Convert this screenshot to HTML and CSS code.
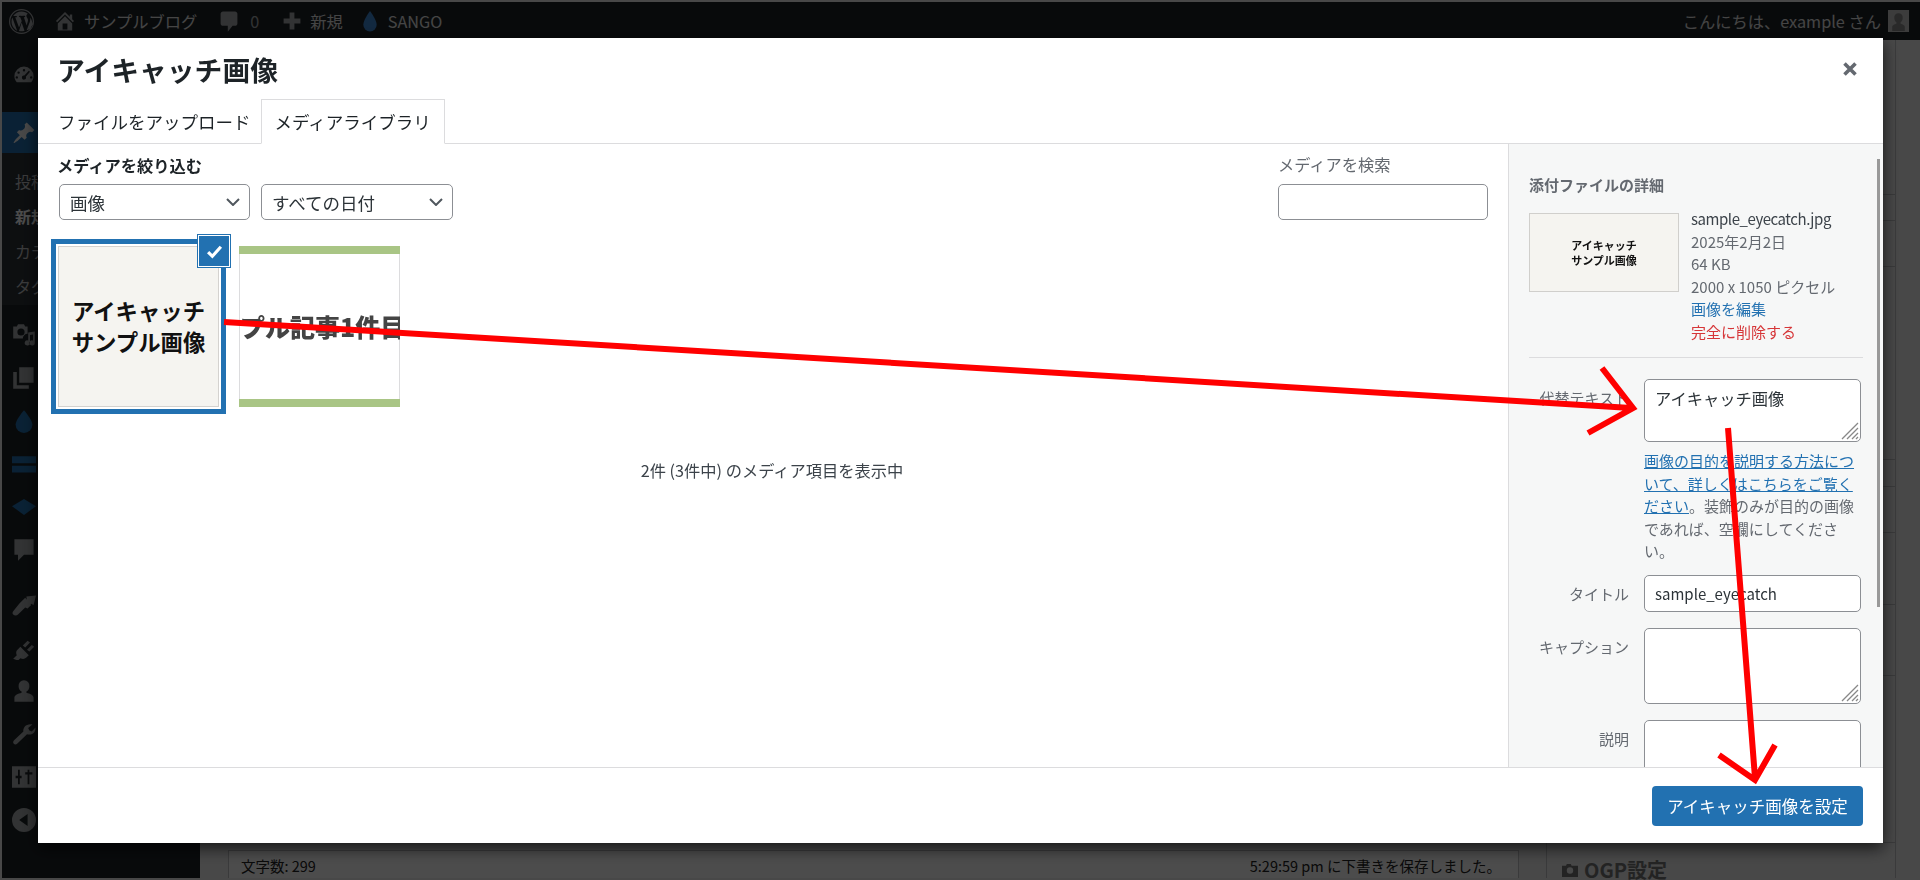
FILE: index.html
```html
<!DOCTYPE html>
<html lang="ja">
  <head>
    <meta charset="UTF-8" />
    <title>アイキャッチ画像</title>
    <link rel="stylesheet" href="styles.css">
  </head>
  <body>
    <!-- admin page behind the modal -->
    <header class="adminbar">
      <svg class="bar-logo" viewBox="0 0 20 20"><path fill-rule="evenodd" d="M10 0a10 10 0 1 0 0 20a10 10 0 0 0 0-20zM10 1a9 9 0 1 1 0 18a9 9 0 0 1 0-18zM8 14.8L5 6.6l1.050-.1c.4-.1.4-1-.1-1 0 0-1.300.1-2.100.1h-.5C4.700 3.400 7.200 2 10 2c2.100 0 4 .8 5.400 2.100-.6-.1-1.500.3-1.500 1.400 0 .5.400 1 .7 1.600.3.500.6 1.100.6 1.900 0 .6-.3 1.300-.5 2.100l-.6 2.100-2.200-6.600c.5 0 .8-.2.8-.2.4 0 .4-1-.1-1 0 0-1.300.1-2.200.1-.8 0-2.100-.1-2.100-.1-.5 0-.5 1-.1 1l.8.1 1.200 3.100zM14.100 17l2.200-5.800c.2-.4.5-1.200.6-2 .3-1.400 0-2.100 0-2.400 1.200 1.600 1.900 3.600 1.900 5.700 0 2.300-2.200 3.800-4.700 4.500zM2.700 6.800l3.800 10.500C3.800 16 2 13.200 2 10c0-1.200.2-2.300.7-3.200zM10.100 10.700l2.300 6.700c-.7.300-1.500.4-2.400.4-.7 0-1.400-.1-2-.3z"/></svg>
      <svg class="bar-icon home-icon" viewBox="0 0 20 20"><path d="M16 8.500l1.530 1.530-1.060 1.060L10 4.620l-6.470 6.470-1.060-1.060L10 2.500l4 4v-2h2v4zm-6-2.460l6 5.990V18H4v-5.970zM12 17v-5H8v5h4z"/></svg>
      <span class="bar-text site-name">サンプルブログ</span>
      <svg class="bar-icon comment-icon" viewBox="0 0 20 20"><path d="M5 2h10c1.100 0 2 .9 2 2v8c0 1.100-.9 2-2 2h-2l-4 5v-5H5c-1.100 0-2-.9-2-2V4c0-1.100.9-2 2-2z"/></svg>
      <span class="bar-text zero">0</span>
      <svg class="bar-icon plus-icon" viewBox="0 0 20 20"><path d="M17 8v4h-5v5H8v-5H3V8h5V3h4v5h5z"/></svg>
      <span class="bar-text new-text">新規</span>
      <svg class="drop-icon" viewBox="0 0 16 22"><path d="M8 0C8 0 1 9 1 14.500a7 7 0 0 0 14 0C15 9 8 0 8 0z"/></svg>
      <span class="bar-text sango-text">SANGO</span>
      <span class="bar-text greeting">こんにちは、example さん</span>
      <span class="avatar"><svg viewBox="0 0 20 20"><path d="M10 3a4 4 0 0 1 4 4.500c0 2-1.200 3.500-2 4.200v1.300c2 .8 4 1.500 4 3v4H4v-4c0-1.500 2-2.200 4-3v-1.300c-.8-.7-2-2.200-2-4.200A4 4 0 0 1 10 3z"/></svg></span>
    </header>

    <div class="page">
      <nav class="sidemenu">
        <div class="menu-item first"><svg viewBox="0 0 20 20"><path fill-rule="evenodd" d="M10 3a8 8 0 0 0-8 8c0 2 .8 3.800 2 5h12c1.200-1.200 2-3 2-5a8 8 0 0 0-8-8zM10 5a1 1 0 1 1 0 2a1 1 0 0 1 0-2zM5.500 7a1 1 0 1 1 0 2a1 1 0 0 1 0-2zM14 6.500l1 .8-3.500 4.200a1.700 1.700 0 1 1-1.200-1zM4 11a1 1 0 1 1 0 2a1 1 0 0 1 0-2zM16 11a1 1 0 1 1 0 2a1 1 0 0 1 0-2z"/></svg></div>
        <div class="menu-item active"><svg viewBox="0 0 20 20"><path d="M10.440 3.020l1.820-1.820 6.360 6.350-1.830 1.820c-1.050-.68-2.480-.57-3.410.36l-.75.75c-.92.93-1.040 2.350-.35 3.410l-1.830 1.820-2.410-2.410-2.800 2.790c-.42.42-3.380 2.710-3.800 2.290s1.860-3.390 2.280-3.810l2.790-2.790L4.100 9.360l1.830-1.820c1.050.69 2.480.57 3.400-.36l.75-.75c.93-.92 1.050-2.350.36-3.410z"/></svg></div>
        <ul class="submenu">
          <li>投稿一覧</li>
          <li class="current">新規追加</li>
          <li>カテゴリー</li>
          <li>タグ</li>
        </ul>
        <div class="menu-item"><svg viewBox="0 0 20 20"><path fill-rule="evenodd" d="M1 3h3l1-2h5l1 2h2v6a4 4 0 0 0-4 4H1zM7.500 4.500a3 3 0 1 0 0 6a3 3 0 0 0 0-6zM19 7v9.500a2.200 2.200 0 1 1-1.500-2V9.500L15 10v6.500a2.200 2.200 0 1 1-1.500-2V8z"/></svg></div>
        <div class="menu-item"><svg viewBox="0 0 20 20"><path d="M6 14V1h12v13zM4 16h10v3H1V5h3z"/></svg></div>
        <div class="menu-item"><svg class="tinted" viewBox="0 0 20 20"><path d="M10 1C10 1 3 9 3 13a7 7 0 0 0 14 0C17 9 10 1 10 1z"/></svg></div>
        <div class="menu-item"><svg class="tinted wide" viewBox="0 0 28 20"><path d="M0 1h28v8H0zM0 12h28v8H0z"/></svg></div>
        <div class="menu-item"><svg class="tinted wide" viewBox="0 0 30 20"><path d="M15 0l15 9-15 11L0 9z"/></svg></div>
        <div class="menu-item"><svg viewBox="0 0 20 20"><path d="M2 1h16v13H10l-5 5v-5H2z"/></svg></div>
        <div class="menu-item gap"><svg viewBox="0 0 20 20"><path d="M12 3l8-1-2 8-2-1-3 3zM11 4l5 6-3 3-2-1-6 6c-1 1-3 1-4 0s-.5-2.500.5-3.500L6 9l1-1z"/></svg></div>
        <div class="menu-item"><svg viewBox="0 0 20 20"><path d="M1 19l3-3c-1-2-.5-4 1-5l2-2 7 7-2 2c-1.500 1.200-3 1.500-5 .5l-2 2zM9 8l4-4 2 1.500-4 4zM12.500 11.500l4-4 2 1.500-4 4z"/></svg></div>
        <div class="menu-item"><svg viewBox="0 0 20 20"><path d="M10 1a4.500 4.500 0 0 1 4.500 5c0 2-1 3.500-2.500 4.500v1c3 .8 6 2 6 4V19H2v-3.500c0-2 3-3.200 6-4v-1C6.500 9.500 5.500 8 5.500 6A4.500 4.500 0 0 1 10 1z"/></svg></div>
        <div class="menu-item"><svg viewBox="0 0 20 20"><path d="M17 2l-3.500 3 1 2 2 1 3-3.500c.5 3-1.500 6-5 6-.8 0-1.300 0-2-.3L4.500 18c-1 1-2.300 1-3 .2s-.8-2 .2-3l7.800-7.200C9 4.500 12 1 17 2z"/></svg></div>
        <div class="menu-item"><svg viewBox="0 0 20 20"><path fill-rule="evenodd" d="M0 1h20v18H0zM5 4v5H3v2h2v5h1.500v-5H8V9H6.500V4zM13 4v2h-2v2h2v8h1.500V8H17V6h-2.500V4z"/></svg></div>
        <div class="menu-item"><svg viewBox="0 0 20 20"><path fill-rule="evenodd" d="M10 0a10 10 0 1 0 0 20a10 10 0 0 0 0-20zM13 5v10L6 10z"/></svg></div>
      </nav>

      <div class="content">
        <div class="editor-col">
          <div class="statusbar">
            <span>文字数: 299</span>
            <span>5:29:59 pm に下書きを保存しました。</span>
          </div>
        </div>
        <aside class="meta-col">
          <div class="metabox" style="height: 155px"></div>
          <div class="metabox" style="height: 26px"></div>
          <div class="metabox" style="height: 46px"></div>
          <div class="metabox" style="height: 193px"></div>
          <div class="metabox" style="height: 27px"></div>
          <div class="metabox" style="height: 46px"></div>
          <div class="metabox" style="height: 72px"></div>
          <div class="metabox" style="height: 71px"></div>
          <div class="metabox" style="height: 167px"></div>
          <div class="ogp">
            <svg viewBox="0 0 20 16"><path fill-rule="evenodd" d="M0 2h5l1-2h5l1 2h8v14H0zM10 4a4 4 0 1 0 0 8a4 4 0 0 0 0-8z"/></svg>
            <span>OGP設定</span>
          </div>
        </aside>
      </div>
    </div>

    <div class="overlay"></div>

    <!-- modal -->
    <div class="modal">
      <div class="modal-head">
        <h1>アイキャッチ画像</h1>
        <svg class="close-icon" viewBox="0 0 14 14"><path d="M1.500 1.500l11 11M12.500 1.500l-11 11"/></svg>
      </div>
      <div class="tabs">
        <a class="tab">ファイルをアップロード</a>
        <a class="tab active">メディアライブラリ</a>
      </div>

      <div class="modal-body">
        <section class="browser">
          <div class="toolbar">
            <div>
              <h2 class="filter-title">メディアを絞り込む</h2>
              <div class="filters">
                <select class="filter type-filter"><option>画像</option></select>
                <select class="filter date-filter"><option>すべての日付</option></select>
              </div>
            </div>
            <div class="search">
              <label>メディアを検索</label>
              <input type="search" />
            </div>
          </div>

          <div class="attachments">
            <div class="attachment selected">
              <div class="thumb-big">アイキャッチ<br />サンプル画像</div>
              <span class="check"><svg viewBox="0 0 16 16"><path d="M2 8.500l4 4 8-9"/></svg></span>
            </div>
            <div class="attachment">
              <div class="thumb-green"><span>プル記事1件目</span></div>
            </div>
          </div>
          <p class="count">2件 (3件中) のメディア項目を表示中</p>
        </section>

        <aside class="details">
          <h2>添付ファイルの詳細</h2>
          <div class="file-info">
            <div class="thumb-small">アイキャッチ<br />サンプル画像</div>
            <div class="file-meta">
              <div class="file-name">sample_eyecatch.jpg</div>
              <div>2025年2月2日</div>
              <div>64 KB</div>
              <div>2000 x 1050 ピクセル</div>
              <div><a class="link">画像を編集</a></div>
              <div><a class="del">完全に削除する</a></div>
            </div>
          </div>
          <div class="fields">
            <label>代替テキスト</label>
            <div>
              <textarea class="alt-box" readonly>アイキャッチ画像</textarea>
              <p class="hint"><a class="link under">画像の目的を説明する方法について、詳しくはこちらをご覧ください</a>。装飾のみが目的の画像であれば、空欄にしてください。</p>
            </div>
            <label>タイトル</label>
            <input type="text" value="sample_eyecatch" readonly />
            <label>キャプション</label>
            <textarea class="caption-box" readonly></textarea>
            <label>説明</label>
            <textarea class="caption-box" readonly></textarea>
          </div>
          <span class="scroll-thumb"></span>
        </aside>
      </div>

      <div class="modal-foot">
        <button>アイキャッチ画像を設定</button>
      </div>
    </div>

    <!-- red arrows drawn on top of the screenshot -->
    <svg class="arrows" viewBox="0 0 1920 880">
      <path d="M224 322L1631 408M1602 368L1633 408L1588 433"/>
      <path d="M1728 428L1755 778M1719 755L1755 780L1775 745"/>
    </svg>
  </body>
</html>
```

FILE: styles.css
```css
* {
  margin: 0;
  padding: 0;
  box-sizing: border-box;
}
html,
body {
  height: 880px;
  overflow: hidden;
}
body {
  display: flex;
  flex-direction: column;
  padding: 2px 0 2px 2px;
  background: #f0f0f1;
  font-family: "Noto Sans CJK JP", "Noto Sans", sans-serif;
  font-size: 15px;
  line-height: 22.5px;
  color: #3c434a;
}

/* admin bar */
.adminbar {
  display: flex;
  align-items: center;
  flex: none;
  height: 38px;
  background: #1d2327;
}
.adminbar svg {
  fill: #a7aaad;
}
.bar-logo {
  width: 25px;
  height: 25px;
  margin-left: 7px;
}
.bar-icon {
  width: 24px;
  height: 24px;
}
.home-icon {
  margin-left: 19px;
}
.bar-text {
  font-size: 16.25px;
  color: #e6e6e6;
}
.site-name {
  margin-left: 7px;
}
.comment-icon {
  margin-left: 20px;
}
.zero {
  margin-left: 9px;
  color: #a7aaad;
}
.plus-icon {
  margin-left: 21px;
}
.new-text {
  margin-left: 6px;
}
.adminbar .drop-icon {
  width: 16px;
  height: 21px;
  margin-left: 19px;
  fill: #3f8ad6;
}
.sango-text {
  margin-left: 10px;
}
.greeting {
  margin-left: auto;
}
.avatar {
  display: block;
  width: 21px;
  height: 22px;
  margin: 0 11px 0 7px;
  background: #c8c8c8;
  overflow: hidden;
}
.adminbar .avatar svg {
  display: block;
  fill: #8a8a8a;
}

/* page behind */
.page {
  display: flex;
  flex: 1;
  min-height: 0;
}
.sidemenu {
  flex: none;
  width: 198px;
  background: #1d2327;
  color: #f0f0f1;
}
.menu-item {
  display: flex;
  align-items: center;
  height: 43px;
  padding-left: 10px;
}
.menu-item svg {
  width: 24px;
  height: 24px;
  fill: #a7aaad;
}
.menu-item svg.tinted {
  fill: #2271b1;
}
.menu-item.first {
  margin-top: 13px;
}
.menu-item.active {
  margin-top: 16px;
  height: 41px;
  background: #2271b1;
}
.menu-item.active svg {
  fill: #f0f0f1;
}
.menu-item.gap {
  margin-top: 12px;
}
.submenu {
  height: 152px;
  margin-bottom: 8px;
  padding-top: 11px;
  list-style: none;
  background: #2c3338;
  color: #c3c4c7;
  font-size: 16px;
}
.submenu li {
  height: 35px;
  padding-left: 13px;
  line-height: 35px;
}
.submenu li.current {
  color: #fff;
  font-weight: 700;
}
.content {
  display: flex;
  flex: 1;
  min-width: 0;
}
.editor-col {
  display: flex;
  flex: none;
  align-items: flex-end;
  width: 1319px;
  padding-left: 28px;
}
.statusbar {
  display: flex;
  justify-content: space-between;
  width: 100%;
  height: 28px;
  padding: 4px 17px 0 12px;
  border: 1px solid #c3c4c7;
  border-bottom: 0;
  background: #fff;
  font-size: 14.5px;
  color: #222;
}
.meta-col {
  flex: none;
  width: 350px;
  margin-left: 27px;
  border-left: 1px solid #c3c4c7;
  border-right: 1px solid #c3c4c7;
}
.metabox {
  border-bottom: 1px solid #c3c4c7;
}
.ogp {
  display: flex;
  align-items: center;
  gap: 6px;
  margin: 19px 0 0 15px;
  font-size: 20px;
  font-weight: 700;
  line-height: 16px;
  color: #777;
}
.ogp svg {
  width: 16px;
  height: 13px;
  fill: #777;
}
.overlay {
  position: fixed;
  inset: 0;
  background: rgba(0, 0, 0, 0.7);
}

/* modal */
.modal {
  position: fixed;
  top: 38px;
  left: 38px;
  display: flex;
  flex-direction: column;
  width: 1845px;
  height: 805px;
  background: #fff;
  box-shadow: 0 5px 15px rgba(0, 0, 0, 0.7);
}
.modal-head {
  display: flex;
  align-items: center;
  justify-content: space-between;
  flex: none;
  height: 61px;
  padding: 0 26px 0 19px;
}
.modal-head h1 {
  font-size: 27.8px;
  line-height: 50px;
  color: #1d2327;
}
.close-icon {
  width: 14px;
  height: 14px;
  fill: none;
  stroke: #646970;
  stroke-width: 3.6;
}
.tabs {
  display: flex;
  flex: none;
  height: 45px;
  padding-left: 8px;
  border-bottom: 1px solid #dcdcde;
}
.tab {
  height: 45px;
  padding: 0 9px 0 11px;
  font-size: 17.5px;
  line-height: 43px;
  color: #1d2327;
  border: 1px solid transparent;
}
.tab.active {
  padding: 0 13px;
  border-color: #dcdcde #dcdcde #fff;
  background: #fff;
}
.modal-body {
  display: flex;
  flex: 1;
  min-height: 0;
}
.modal-foot {
  flex: none;
  display: flex;
  justify-content: flex-end;
  height: 76px;
  padding: 18px 20px 0 0;
  border-top: 1px solid #dcdcde;
}
.modal-foot button {
  width: 211px;
  height: 40px;
  border: none;
  border-radius: 4px;
  background: #2271b1;
  color: #fff;
  font-family: inherit;
  font-size: 16.5px;
}

/* media browser */
.browser {
  flex: none;
  width: 1470px;
}
.toolbar {
  display: flex;
  justify-content: space-between;
  padding: 10px 20px 0 21px;
}
.filter-title {
  margin-left: -2px;
  font-size: 16.25px;
  line-height: 22px;
  color: #1d2327;
}
.filters {
  display: flex;
  gap: 11px;
  margin-top: 8px;
}
.filter {
  height: 36px;
  padding-left: 10px;
  border: 1px solid #8c8f94;
  border-radius: 5px;
  appearance: none;
  background: #fff url("data:image/svg+xml,%3Csvg xmlns='http://www.w3.org/2000/svg' viewBox='0 0 14 8'%3E%3Cpath d='M1 1l6 6 6-6' fill='none' stroke='%2350575e' stroke-width='2'/%3E%3C/svg%3E") no-repeat right 9px center / 14px 8px;
  font-family: inherit;
  font-size: 17.5px;
  color: #2c3338;
}
.type-filter {
  width: 191px;
}
.date-filter {
  width: 192px;
}
.search label {
  display: block;
  font-size: 16.25px;
  line-height: 22px;
  margin-top: -1px;
  color: #646970;
}
.search input {
  display: block;
  width: 210px;
  height: 36px;
  margin-top: 9px;
  border: 1px solid #8c8f94;
  border-radius: 5px;
  background: #fff;
}
.attachments {
  display: flex;
  gap: 20px;
  margin: 26px 0 0 20px;
}
.attachment {
  position: relative;
  width: 161px;
  height: 161px;
}
.attachment.selected {
  box-shadow: 0 0 0 2px #fff, 0 0 0 7px #2271b1;
}
.thumb-big {
  display: flex;
  align-items: center;
  justify-content: center;
  height: 100%;
  padding-bottom: 2px;
  border: 1px solid #d4d2cf;
  background: #f5f4f0;
  font-size: 22.4px;
  font-weight: 700;
  line-height: 31px;
  text-align: center;
  color: #111;
}
.check {
  position: absolute;
  top: -11px;
  right: -11px;
  display: flex;
  align-items: center;
  justify-content: center;
  width: 32px;
  height: 32px;
  border: 1px solid #fff;
  background: #2271b1;
  box-shadow: 0 0 0 1px #2271b1;
}
.check svg {
  width: 17px;
  height: 17px;
  fill: none;
  stroke: #fff;
  stroke-width: 3;
}
.thumb-green {
  display: flex;
  align-items: center;
  height: 100%;
  padding-left: 1px;
  overflow: hidden;
  white-space: nowrap;
  border-top: 8px solid #a9c585;
  border-bottom: 8px solid #a9c585;
  box-shadow: inset 1px 0 #dcdcde, inset -1px 0 #dcdcde;
  font-size: 25px;
  font-weight: 900;
  color: #444;
}
.thumb-green span {
  filter: blur(0.7px);
}
.count {
  width: 100%;
  margin-top: 52px;
  padding-right: 2px;
  font-size: 16.25px;
  text-align: center;
  color: #3c434a;
}

/* attachment details */
.details {
  position: relative;
  flex: 1;
  min-width: 0;
  overflow: hidden;
  padding: 30px 0 0 20px;
  border-left: 1px solid #dcdcde;
  background: #f6f7f7;
  color: #646970;
}
.details h2 {
  font-size: 15px;
  line-height: 22px;
}
.file-info {
  display: flex;
  gap: 12px;
  width: 334px;
  height: 150px;
  margin-top: 12px;
  border-bottom: 1px solid #dcdcde;
}
.thumb-small {
  flex: none;
  width: 150px;
  height: 79px;
  margin-top: 5px;
  padding-top: 24px;
  border: 1px solid #d0cfcc;
  background: #f5f4f0;
  font-size: 11px;
  font-weight: 700;
  line-height: 15px;
  text-align: center;
  color: #111;
}
.file-name {
  letter-spacing: -0.45px;
  color: #3c434a;
}
.link {
  color: #2271b1;
}
.link.under {
  text-decoration: underline;
}
.del {
  color: #d63638;
}
.fields {
  display: grid;
  grid-template-columns: 100px 217px;
  column-gap: 15px;
  row-gap: 16px;
  margin-top: 21px;
}
.fields label {
  padding-top: 8px;
  text-align: right;
}
.fields textarea,
.fields input {
  display: block;
  width: 217px;
  padding: 6px 10px;
  border: 1px solid #8c8f94;
  border-radius: 5px;
  background-color: #fff;
  font-family: inherit;
  font-size: 16.25px;
  color: #2c3338;
}
.fields textarea {
  resize: none;
  background-image: url("data:image/svg+xml,%3Csvg xmlns='http://www.w3.org/2000/svg' viewBox='0 0 18 18'%3E%3Cpath d='M1 17L17 1M6 17L17 6M11 17l6-6M15 17l2-2' fill='none' stroke='%23888' stroke-width='1.300'/%3E%3C/svg%3E");
  background-repeat: no-repeat;
  background-position: right 1px bottom 1px;
  background-size: 18px 18px;
}
.fields input {
  height: 37px;
  font-size: 15px;
}
.alt-box {
  height: 63px;
}
.caption-box {
  height: 76px;
}
.hint {
  margin-top: 8px;
  margin-bottom: -4px;
}
.scroll-thumb {
  position: absolute;
  top: 15px;
  right: 3px;
  width: 3px;
  height: 448px;
  background: #999;
}

/* annotation */
.arrows {
  position: fixed;
  inset: 0;
  width: 1920px;
  height: 880px;
  fill: none;
  stroke: #f00;
  stroke-width: 6;
  pointer-events: none;
}
```
